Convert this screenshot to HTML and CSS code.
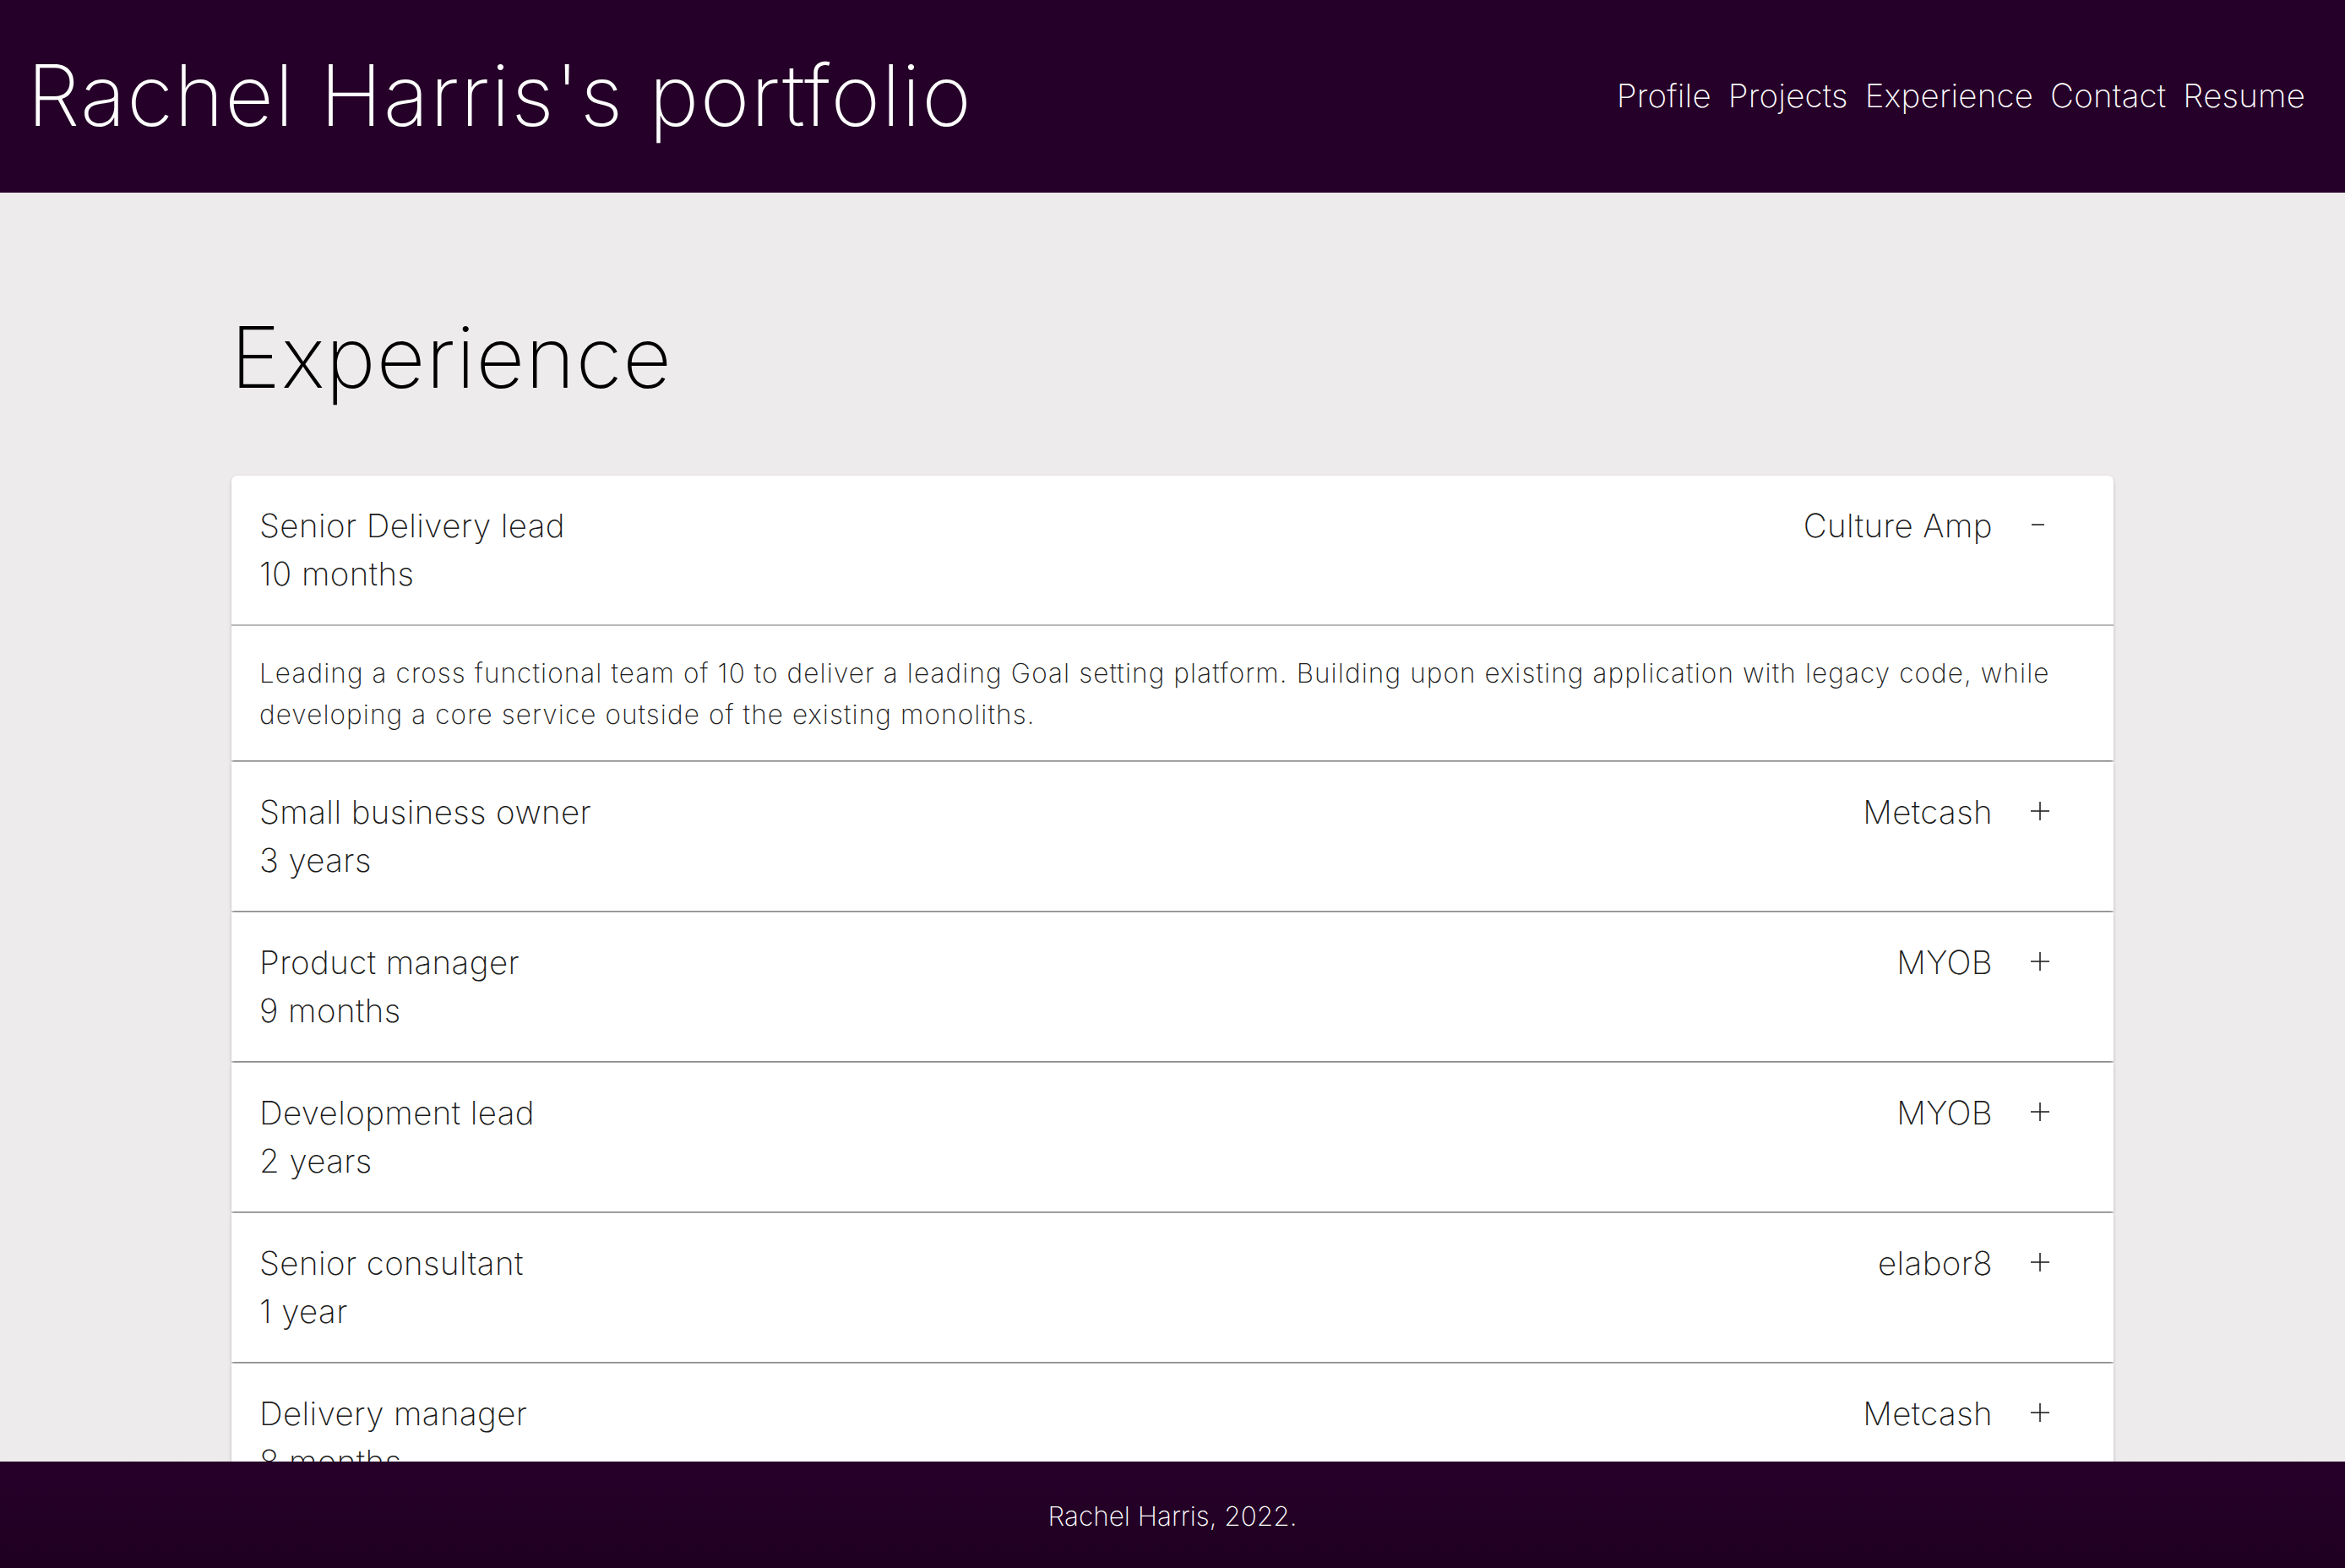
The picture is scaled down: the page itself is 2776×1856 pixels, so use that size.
FILE: index.html
```html
<!DOCTYPE html>
<html lang="en">
<head>
<meta charset="utf-8">
<title>Rachel Harris's portfolio</title>
<link rel="stylesheet" href="styles.css">
</head>
<body>
<header class="site-header">
  <h1 class="site-title">Rachel Harris's portfolio</h1>
  <nav class="site-nav">
    <a href="#profile">Profile</a>
    <a href="#projects">Projects</a>
    <a href="#experience">Experience</a>
    <a href="#contact">Contact</a>
    <a href="#resume">Resume</a>
  </nav>
</header>

<main class="content" id="experience">
  <h2 class="page-heading">Experience</h2>

  <div class="accordion">
    <section class="acc-item acc-first acc-open">
      <div class="acc-summary">
        <div class="acc-role">
          <div class="acc-title">Senior Delivery lead</div>
          <div class="acc-duration">10 months</div>
        </div>
        <div class="acc-side">
          <span class="acc-company">Culture Amp</span>
          <span class="acc-icon">
            <svg width="22" height="22" viewBox="0 0 22 22"><line x1="1" y1="11" x2="16" y2="11" stroke="#222" stroke-width="1.6"/></svg>
          </span>
        </div>
      </div>
      <div class="acc-details">
        Leading a cross functional team of 10 to deliver a leading Goal setting platform. Building upon existing application with legacy code, while<br>developing a core service outside of the existing monoliths.
      </div>
    </section>

    <section class="acc-item">
      <div class="acc-summary">
        <div class="acc-role">
          <div class="acc-title">Small business owner</div>
          <div class="acc-duration">3 years</div>
        </div>
        <div class="acc-side">
          <span class="acc-company">Metcash</span>
          <span class="acc-icon">
            <svg width="22" height="22" viewBox="0 0 22 22"><line x1="0" y1="11" x2="22" y2="11" stroke="#222" stroke-width="1.6"/><line x1="11" y1="0" x2="11" y2="22" stroke="#222" stroke-width="1.6"/></svg>
          </span>
        </div>
      </div>
    </section>

    <section class="acc-item">
      <div class="acc-summary">
        <div class="acc-role">
          <div class="acc-title">Product manager</div>
          <div class="acc-duration">9 months</div>
        </div>
        <div class="acc-side">
          <span class="acc-company">MYOB</span>
          <span class="acc-icon">
            <svg width="22" height="22" viewBox="0 0 22 22"><line x1="0" y1="11" x2="22" y2="11" stroke="#222" stroke-width="1.6"/><line x1="11" y1="0" x2="11" y2="22" stroke="#222" stroke-width="1.6"/></svg>
          </span>
        </div>
      </div>
    </section>

    <section class="acc-item">
      <div class="acc-summary">
        <div class="acc-role">
          <div class="acc-title">Development lead</div>
          <div class="acc-duration">2 years</div>
        </div>
        <div class="acc-side">
          <span class="acc-company">MYOB</span>
          <span class="acc-icon">
            <svg width="22" height="22" viewBox="0 0 22 22"><line x1="0" y1="11" x2="22" y2="11" stroke="#222" stroke-width="1.6"/><line x1="11" y1="0" x2="11" y2="22" stroke="#222" stroke-width="1.6"/></svg>
          </span>
        </div>
      </div>
    </section>

    <section class="acc-item">
      <div class="acc-summary">
        <div class="acc-role">
          <div class="acc-title">Senior consultant</div>
          <div class="acc-duration">1 year</div>
        </div>
        <div class="acc-side">
          <span class="acc-company">elabor8</span>
          <span class="acc-icon">
            <svg width="22" height="22" viewBox="0 0 22 22"><line x1="0" y1="11" x2="22" y2="11" stroke="#222" stroke-width="1.6"/><line x1="11" y1="0" x2="11" y2="22" stroke="#222" stroke-width="1.6"/></svg>
          </span>
        </div>
      </div>
    </section>

    <section class="acc-item">
      <div class="acc-summary">
        <div class="acc-role">
          <div class="acc-title">Delivery manager</div>
          <div class="acc-duration">8 months</div>
        </div>
        <div class="acc-side">
          <span class="acc-company">Metcash</span>
          <span class="acc-icon">
            <svg width="22" height="22" viewBox="0 0 22 22"><line x1="0" y1="11" x2="22" y2="11" stroke="#222" stroke-width="1.6"/><line x1="11" y1="0" x2="11" y2="22" stroke="#222" stroke-width="1.6"/></svg>
          </span>
        </div>
      </div>
    </section>
  </div>
</main>

<footer class="site-footer">Rachel Harris, 2022.</footer>
</body>
</html>
```

FILE: styles.css
```css
* { box-sizing: border-box; }

html, body {
  margin: 0;
  padding: 0;
}

body {
  background: #edebec;
  font-family: Inter, "Open Sans", "Liberation Sans", sans-serif;
  font-weight: 200;
  color: #1c1c1c;
  min-height: 100vh;
  padding-bottom: 200px;
}

.site-header {
  height: 228px;
  background: #250028;
  display: flex;
  justify-content: space-between;
  align-items: flex-start;
  padding: 0 47px 0 32px;
}

.site-title {
  margin: 63px 0 0 0;
  font-size: 100px;
  line-height: 1;
  font-weight: 200;
  color: #ffffff;
  letter-spacing: 1.4px;
}

.site-nav {
  margin-top: 94px;
  display: flex;
  gap: 20px;
}

.site-nav a {
  color: #ffffff;
  text-decoration: none;
  font-size: 38.5px;
  line-height: 1;
  font-weight: 200;
  letter-spacing: 0.2px;
}

.content {
  width: 2228px;
  margin: 0 auto;
}

.page-heading {
  margin: 145px 0 90px -1px;
  font-size: 100px;
  line-height: 1;
  font-weight: 200;
  color: #000;
  letter-spacing: 1px;
}

.accordion {
  display: flex;
  flex-direction: column;
}

.acc-item {
  position: relative;
  background: #ffffff;
  box-shadow: 0 3px 2px -2px rgba(0,0,0,0.32), 0 2px 2px 0 rgba(0,0,0,0.16), 0 2px 5px 0 rgba(0,0,0,0.12);
}

.acc-item + .acc-item {
  margin-top: 2px;
}

.acc-first {
  border-radius: 7px 7px 0 0;
}

.acc-summary {
  display: flex;
  justify-content: space-between;
  align-items: flex-start;
  padding: 31px 76px 31px 33px;
}

.acc-title,
.acc-duration,
.acc-company {
  font-size: 38.5px;
  line-height: 57px;
  font-weight: 200;
  color: #1a1a1a;
  letter-spacing: 0.4px;
}

.acc-side {
  display: flex;
  align-items: flex-start;
}

.acc-icon {
  width: 22px;
  height: 57px;
  margin-left: 45px;
  display: flex;
  align-items: center;
}

.acc-icon svg {
  display: block;
  margin-top: -4px;
}

.acc-details {
  border-top: 2px solid #b8b8b8;
  padding: 31px 33px 30px 33px;
  font-size: 31.5px;
  line-height: 49px;
  font-weight: 200;
  color: #1a1a1a;
  letter-spacing: 1.1px;
}

.site-footer {
  position: fixed;
  left: 0;
  right: 0;
  bottom: 0;
  height: 126px;
  background: linear-gradient(#27002a, #1f0021);
  color: #ffffff;
  display: flex;
  align-items: center;
  justify-content: center;
  font-size: 31.5px;
  font-weight: 200;
  padding-top: 2px;
}
```
